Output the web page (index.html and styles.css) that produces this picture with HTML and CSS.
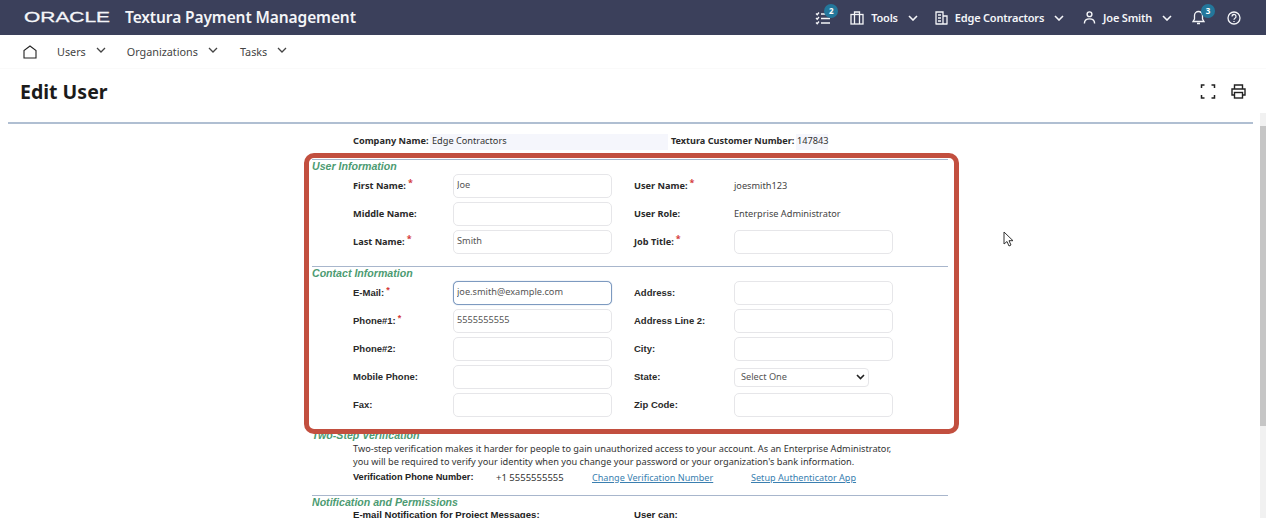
FILE: index.html
```
<!DOCTYPE html>
<html lang="en">
<head>
<meta charset="utf-8">
<title>Edit User</title>
<link rel="stylesheet" href="styles.css">
</head>
<body>
<header class="topbar">
  <div class="brand"><span class="logo">ORACLE</span><span class="product">Textura Payment Management</span></div>
  <div class="top-actions">
    <span class="top-icon top-tasks">
      <svg width="16" height="16" viewBox="0 0 16 16" fill="none" stroke="currentColor" stroke-width="1.3"><path d="M1 3.500l1.200 1.200L4 2.500M1 8l1.200 1.200L4 7M1 12.500l1.200 1.200L4 11.500M6 4h9M6 8.500h9M6 13h9"/></svg>
      <span class="badge">2</span>
    </span>
    <span class="top-item top-tools">
      <svg width="14" height="14" viewBox="0 0 14 14" fill="none" stroke="currentColor" stroke-width="1.3"><rect x="1" y="3.500" width="12" height="9.500"/><path d="M4.500 13V1h5v12"/></svg>
      <span>Tools</span>
      <svg class="chev" width="10" height="6" viewBox="0 0 10 6" fill="none" stroke="currentColor" stroke-width="1.600"><path d="M1 1l4 4 4-4"/></svg>
    </span>
    <span class="top-item top-org">
      <svg width="13" height="14" viewBox="0 0 13 14" fill="none" stroke="currentColor" stroke-width="1.300"><path d="M1 13V1h7v12M8 5h4v8M.5 13h12M3 4h3M3 7h3M3 10h3"/></svg>
      <span>Edge Contractors</span>
      <svg class="chev" width="10" height="6" viewBox="0 0 10 6" fill="none" stroke="currentColor" stroke-width="1.600"><path d="M1 1l4 4 4-4"/></svg>
    </span>
    <span class="top-item top-user">
      <svg width="13" height="15" viewBox="0 0 14 15" fill="none" stroke="currentColor" stroke-width="1.500"><circle cx="7" cy="4" r="2.600"/><path d="M1.500 14c0-3.200 2.200-5 5.500-5s5.500 1.800 5.500 5"/></svg>
      <span>Joe Smith</span>
      <svg class="chev" width="10" height="6" viewBox="0 0 10 6" fill="none" stroke="currentColor" stroke-width="1.600"><path d="M1 1l4 4 4-4"/></svg>
    </span>
    <span class="top-icon top-bell">
      <svg width="13" height="15" viewBox="0 0 13 15" fill="none" stroke="currentColor" stroke-width="1.300"><path d="M1 11.500h11L10.500 9V5.500a4 4 0 0 0-8 0V9zM5 13.500h3"/></svg>
      <span class="badge">3</span>
    </span>
    <svg class="top-help" width="14" height="14" viewBox="0 0 14 14" fill="none" stroke="currentColor" stroke-width="1.300"><circle cx="7" cy="7" r="6"/><path d="M5 5.500a2 2 0 1 1 3 1.700c-.7.4-1 .8-1 1.500M7 10v1"/></svg>
  </div>
</header>
<nav class="navbar">
  <svg class="home" width="14" height="14" viewBox="0 0 14 14" fill="none" stroke="currentColor" stroke-width="1.100"><path d="M1 13V5.500L7 1l6 4.500V13z"/></svg>
  <span class="nav-item nav-users">Users<svg width="10" height="6" viewBox="0 0 10 6" fill="none" stroke="currentColor" stroke-width="1.300"><path d="M1 1l4 4 4-4"/></svg></span>
  <span class="nav-item nav-orgs">Organizations<svg width="10" height="6" viewBox="0 0 10 6" fill="none" stroke="currentColor" stroke-width="1.300"><path d="M1 1l4 4 4-4"/></svg></span>
  <span class="nav-item">Tasks<svg width="10" height="6" viewBox="0 0 10 6" fill="none" stroke="currentColor" stroke-width="1.300"><path d="M1 1l4 4 4-4"/></svg></span>
</nav>
<div class="titlebar">
  <h1>Edit User</h1>
  <div class="title-actions">
    <svg width="16" height="15" viewBox="0 0 16 15" fill="none" stroke="#222" stroke-width="1.500"><path d="M1.500 4V1h3M11.500 1h3v3M14.500 11v3h-3M4.500 14h-3v-3"/></svg>
    <svg width="15" height="15" viewBox="0 0 15 15" fill="none" stroke="#222" stroke-width="1.400"><path d="M3.500 5V1h8v4M3.500 11H1V5h13v6h-2.500"/><rect x="3.500" y="8.500" width="8" height="5.500"/></svg>
  </div>
</div>
<div class="title-rule"></div>
<div class="content">
  <main class="form">
    <div class="company">
      <span class="strong company-label">Company Name:</span><span class="field-bg company-val">Edge Contractors</span>
      <span class="strong cust-label">Textura Customer Number:</span><span class="field-bg cust-val">147843</span>
    </div>
    <section class="sec sec-user">
      <h2>User Information</h2>
      <div class="grid">
        <label>First Name:<i>*</i></label><input class="inp" value="Joe"><label>User Name:<i>*</i></label><span class="val">joesmith123</span>
        <label>Middle Name:</label><input class="inp"><label>User Role:</label><span class="val">Enterprise Administrator</span>
        <label>Last Name:<i>*</i></label><input class="inp" value="Smith"><label>Job Title:<i>*</i></label><input class="inp">
      </div>
    </section>
    <section class="sec sec-contact">
      <h2>Contact Information</h2>
      <div class="grid arial">
        <label>E-Mail:<i>*</i></label><input class="inp focus" value="joe.smith@example.com"><label>Address:</label><input class="inp">
        <label>Phone#1:<i>*</i></label><input class="inp" value="5555555555"><label>Address Line 2:</label><input class="inp">
        <label>Phone#2:</label><input class="inp"><label>City:</label><input class="inp">
        <label>Mobile Phone:</label><input class="inp"><label>State:</label><span class="select">Select One<svg width="9" height="6" viewBox="0 0 9 6" fill="none" stroke="#222" stroke-width="1.600"><path d="M1 1l3.500 3.500L8 1"/></svg></span>
        <label>Fax:</label><input class="inp"><label>Zip Code:</label><input class="inp">
      </div>
    </section>
    <section class="sec sec-two">
      <h2>Two-Step Verification</h2>
      <p>Two-step verification makes it harder for people to gain unauthorized access to your account. As an Enterprise Administrator,<br>you will be required to verify your identity when you change your password or your organization's bank information.</p>
      <div class="verify">
        <span class="verify-label">Verification Phone Number:</span><span class="verify-num">+1 5555555555</span>
        <a class="link-change" href="#">Change Verification Number</a><a href="#">Setup Authenticator App</a>
      </div>
    </section>
    <section class="sec sec-notify">
      <h2>Notification and Permissions</h2>
      <div class="notify"><span class="notify-a">E-mail Notification for Project Messages:</span><span>User can:</span></div>
    </section>
  </main>
  <div class="scrollbar"><span class="arrow"></span><span class="thumb"></span></div>
  <div class="callout"></div>
</div>
<svg class="cursor" width="12" height="17" viewBox="0 0 12 17" fill="#fff" stroke="#333" stroke-width="1"><path d="M1 1v12l3-2.500 2 4.500 2-1-2-4.300h4z"/></svg>
</body>
</html>
```
FILE: styles.css
```
* { box-sizing: border-box; }
html, body { height: 100%; }
body { margin: 0; height: 518px; overflow: hidden; background: #fff; color: #222; font-family: "Noto Sans", sans-serif; position: relative; }

.topbar { height: 35px; background: #3b405b; color: #f4f5f8; display: flex; align-items: center; justify-content: space-between; padding: 0 25px 0 24px; }
.brand { display: flex; align-items: center; margin-top: -1px; }
.logo { font-family: "Liberation Sans", sans-serif; font-size: 15.500px; -webkit-text-stroke: .3px #f4f5f8; width: 87px; transform: scaleX(1.350); transform-origin: left center; white-space: nowrap; }
.product { font-size: 15.500px; font-weight: 600; margin-left: 14px; letter-spacing: -.1px; }
.top-actions { display: flex; align-items: center; font-size: 11px; font-weight: 600; letter-spacing: -.2px; }
.top-item { display: flex; align-items: center; gap: 7px; }
.chev { margin-left: 3px; }
.top-icon { position: relative; display: flex; }
.badge { position: absolute; top: -6px; left: 9px; width: 14px; height: 14px; border-radius: 50%; background: #23779b; color: #fff; font-size: 8px; font-weight: 700; line-height: 13px; text-align: center; letter-spacing: 0; }
.top-tools { margin-left: 19px; }
.top-org { margin-left: 17px; }
.top-user { margin-left: 19px; }
.top-bell { margin-left: 20px; }
.top-help { margin-left: 22px; }

.navbar { height: 34px; display: flex; align-items: center; padding-left: 23px; font-size: 10.800px; color: #444; border-bottom: 1px solid #fafafa; }
.home { color: #222; }
.nav-item { display: flex; align-items: center; gap: 10px; }
.nav-item svg { margin-top: -3px; }
.nav-users { margin-left: 20px; }
.nav-orgs { margin-left: 21px; }
.nav-orgs + .nav-item { margin-left: 22px; }

.titlebar { height: 53px; display: flex; align-items: flex-start; justify-content: space-between; padding: 11px 20px 0; }
h1 { margin: 0; font-size: 19.500px; line-height: 23px; font-weight: 700; color: #1b1b1b; }
.title-actions { display: flex; gap: 15px; padding-top: 4px; }
.title-rule { height: 2px; margin: 0 13px 0 8px; background: #b0bfd2; }

.content { display: flex; height: 394px; position: relative; }
.form { width: 636px; margin: 0 auto; font-size: 9.200px; color: #333; overflow: hidden; }
.scrollbar { width: 6px; height: 405px; margin-top: -11px; background: #f1f1f1; }
.arrow { display: block; height: 13px; }
.thumb { display: block; height: 300px; background: #c6c6c6; }

.strong { font-weight: 700; color: #2a2a2a; line-height: 13px; }
.company { display: flex; align-items: flex-start; margin: 10px 0 9px 41px; height: 16px; }
.company-label { width: 77px; }
.field-bg { display: block; height: 16px; background: #f5f6fc; line-height: 13px; padding-left: 2px; }
.company-val { width: 238px; }
.cust-label { width: 125px; margin-left: 3px; font-size: 9.100px; }
.cust-val { width: 32px; padding-left: 1px; }

.sec { border-top: 1px solid #a8b6cc; }
.sec-user { height: 107px; }
.sec-contact { height: 163px; }
h2 { margin: 0; font: italic 700 10.600px/13px "Liberation Sans", sans-serif; color: #4c9b72; }

.grid { display: grid; grid-template-columns: 100px 181px 100px 159px; grid-auto-rows: 28px; margin: -1px 0 0 41px; align-items: center; }
.grid label { font-weight: 700; color: #2a2a2a; padding-bottom: 2px; }
.grid label i { color: #d43a3a; font-size: 9px; font-style: normal; vertical-align: 3px; margin-left: 2px; line-height: 0; }
.grid.arial { font-family: "Liberation Sans", sans-serif; font-size: 9.500px; }
.inp { width: 159px; height: 24px; border: 1px solid #e6e6e9; border-radius: 5px; padding: 0 3px 3px; background: #fff; font: 9.200px "Noto Sans", sans-serif; color: #555; outline: 0; }
.focus { border: 1px solid #7d9ac0; box-shadow: 0 0 1px #7d9ac0; }
.val { font: 9.200px "Noto Sans", sans-serif; color: #444; padding-bottom: 2px; }
.select { width: 135px; height: 19px; border: 1px solid #e6e6e9; border-radius: 4px; padding: 0 3px 2px 6px; display: flex; align-items: center; justify-content: space-between; font: 9.200px "Noto Sans", sans-serif; color: #555; }
.select svg { margin-top: 2px; }

.sec-two { border-top: 0; height: 66px; }
.sec-two p { margin: 0 0 0 41px; font-size: 9.200px; line-height: 13px; color: #333; }
.verify { display: flex; margin: 3px 0 0 41px; font-size: 9.500px; line-height: 13px; }
.verify-label { width: 143px; font: 700 9.200px/13px "Liberation Sans", sans-serif; color: #222; }
.verify-num { width: 96px; }
.verify a { color: #3a7fb0; font-size: 9.100px; }
.link-change { width: 159px; }
.notify { display: flex; margin: 0 0 0 41px; font: 700 9.600px/12px "Liberation Sans", sans-serif; color: #222; }
.notify-a { width: 281px; }

.callout { position: absolute; left: 304px; top: 29px; width: 655px; height: 281px; border: 5px solid #c24f3f; border-radius: 10px; pointer-events: none; }
.cursor { position: absolute; left: 1003px; top: 231px; }
```
